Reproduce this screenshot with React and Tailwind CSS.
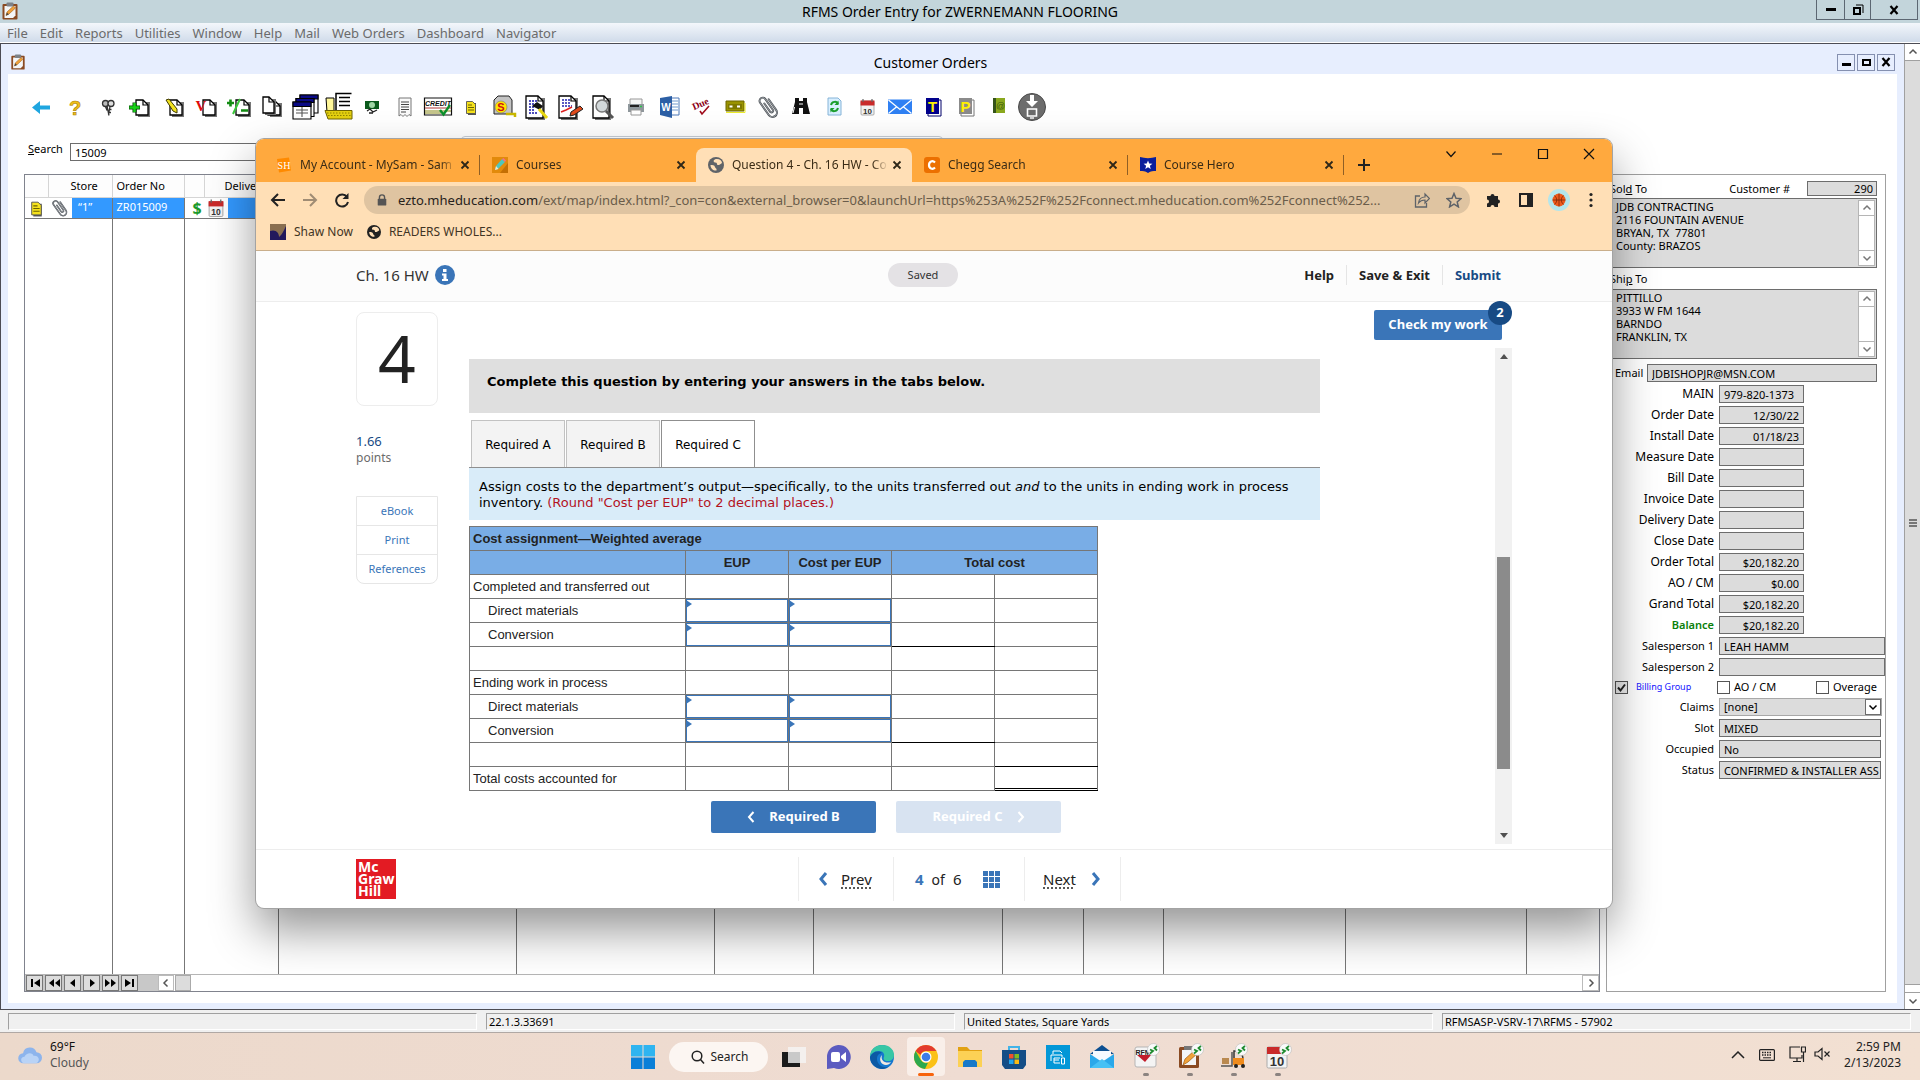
import React from 'react';

/* ---------- shared glyphs ---------- */

function Clipboard({ className }) {
  return (
    <svg viewBox="0 0 16 18" className={className} aria-hidden="true">
      <rect x="0.5" y="2" width="15" height="15.5" rx="1" fill="#8a4a22" />
      <path d="M2.5 4h11v9.5l-2.5 2.5H2.5z" fill="#f4f6f8" />
      <rect x="4.5" y="0.5" width="7" height="4" rx="1" fill="#7d8288" />
      <path d="M4 13.5l1-3.5 6.5-6 2 2-6.500 6z" fill="#f0a23a" stroke="#a15c13" strokeWidth=".6" />
      <path d="M4 13.500l1-3 1.800 1.900z" fill="#444" />
    </svg>
  );
}

function Sheet({ x = 7, y = 7, w = 15, h = 17 }) {
  return (
    <g>
      <path d={`M${x + 2} ${y + 2}h${w}v${h}h${-w}z`} fill="#777" />
      <path d={`M${x} ${y}h${w - 5}l5 5v${h - 5}h${-w}z`} fill="#fff" stroke="#000" strokeWidth="1.300" />
      <path d={`M${x + w - 5} ${y}v5h5`} fill="none" stroke="#000" strokeWidth="1.200" />
    </g>
  );
}

function Calendar() {
  return (
    <g>
      <rect x="9" y="9" width="13" height="14" rx="1" fill="#f2f2f2" stroke="#999" strokeWidth=".8" />
      <path d="M8.500 8.500h14v5h-14z" fill="#c92a2a" />
      <path d="M11 7v3M20 7v3" stroke="#666" strokeWidth="1.200" />
      <text x="15.500" y="21.500" textAnchor="middle" fontSize="8" fontWeight="700" fontFamily="Liberation Sans" fill="#333">10</text>
    </g>
  );
}

function Clip() {
  return (
    <g transform="rotate(-35 15 15)" fill="none" strokeLinecap="round">
      <path d="M20 9v13a4.500 4.500 0 0 1-9 0V7a3.200 3.200 0 0 1 6.400 0v13a1.700 1.700 0 0 1-3.400 0V10" stroke="#4b5056" strokeWidth="2" />
      <path d="M20 9v13a4.500 4.500 0 0 1-9 0V7a3.200 3.200 0 0 1 6.400 0v13a1.700 1.700 0 0 1-3.400 0V10" stroke="#b9bdc1" strokeWidth=".6" />
    </g>
  );
}

function Note() {
  return (
    <g>
      <path d="M12 11h8v12h-8z" fill="#555" />
      <path d="M10.500 9.500h6l3 3v9h-9z" fill="#f5e11c" stroke="#555" strokeWidth=".9" />
      <path d="M12 13h4M12 15.500h6M12 18h6" stroke="#6a6200" strokeWidth="1" />
    </g>
  );
}

const toolbarIcons = [
  ['Back', <path key="a" d="M5 15.500l8-6.500v4.500h10v4H13V22z" fill="#1fa6e0" />],
  ['Help', <text key="a" x="15" y="22.500" textAnchor="middle" fontSize="20" fontWeight="700" fontFamily="Liberation Sans" fill="#f0c01a" stroke="#a87b00" strokeWidth=".6">?</text>],
  ['Keys', <g key="a" fill="none" stroke="#333" strokeWidth="1.300"><circle cx="12.500" cy="11.500" r="3" fill="#bbb" /><circle cx="18" cy="11.500" r="3" fill="#ddd" /><path d="M14 14l2 9.500M17 14.500l-1.500 8M16 17.500h2.500M16 20.500h2M12.500 14.500l1.500 4" /></g>],
  ['Add order', <g key="a"><Sheet x={10} y={8} w={12} h={15} /><path d="M3 15.500h11M8.500 10.500v10" stroke="#074d07" strokeWidth="4" /><path d="M3.500 15.500h10M8.500 11v9" stroke="#19d319" strokeWidth="2.400" /></g>],
  ['Edit order', <g key="a"><Sheet x={11} y={8} w={12} h={15} /><path d="M7 8l3-1 8 10v4l-4-2z" fill="#f2e31f" stroke="#3c3800" strokeWidth="1" /></g>],
  ['Void order', <g key="a"><Sheet x={11} y={8} w={12} h={15} /><text x="9" y="19" textAnchor="middle" fontSize="15" fontWeight="700" fontFamily="Liberation Serif" fill="#e00b0b">V</text></g>],
  ['Adjust order', <g key="a"><Sheet x={11} y={8} w={13} h={15} /><path d="M2 11h7M5.500 7.500v7M16 18.500h7" stroke="#128c12" strokeWidth="2.600" /><path d="M15 7L8 22" stroke="#39c639" strokeWidth="2" /></g>],
  ['Copy', <g key="a"><Sheet x={10} y={9} w={12} h={14} /><Sheet x={5} y={5} w={11} h={16} /></g>],
  ['Windows', <g key="a" stroke="#000" strokeWidth="1.100"><path d="M9 3h18v18H9z" fill="#fff" /><path d="M9 3h18v4H9z" fill="#0a0a86" /><path d="M5 6.500h18v18H5z" fill="#fff" /><path d="M5 6.500h18v4H5z" fill="#0a0a86" /><path d="M2 10h18v17H2z" fill="#fff" /><path d="M2 10h18v4.500H2z" fill="#0a0a86" /><path d="M5 18h12M5 21h12M11 15v10" stroke="#555" /></g>],
  ['Open file', <g key="a"><path d="M11 1.500h17v18H11z" fill="#fff" /><path d="M27.500 1.500H12v17M15 5.500h11M15 9.500h11M15 13.500h11" fill="none" stroke="#000" strokeWidth="1.500" /><path d="M2 6h8v14H3z" fill="#fff79a" stroke="#000" /><path d="M1 18.500h27v8.500H4z" fill="#e3cf10" stroke="#6f6400" /><path d="M3 21h24M4 23.500h23" stroke="#8e8200" strokeDasharray="1.500 1.500" /></g>],
  ['Payment', <g key="a"><path d="M8 9h14v8H8z" fill="#0a5a1c" /><circle cx="15" cy="13" r="3" fill="#9fd6a5" /><path d="M10 19l3-2 3 3 4-2M12 21h4" stroke="#222" strokeWidth="1.300" fill="none" /></g>],
  ['Receipt', <g key="a"><path d="M9 6h12v18l-2-1.500-2 2-2-2-2 2-2-2L9 24z" fill="#fafafa" stroke="#777" /><path d="M11 10h8M11 12.500h8M11 15h8M11 17.500h8M11 20h5" stroke="#444" /></g>],
  ['Credit', <g key="a"><path d="M1.500 6h27v17h-27z" fill="#fff" stroke="#111" strokeWidth="1.200" /><path d="M2 16h26" stroke="#c87a7a" strokeWidth="1.500" /><path d="M2 19h26M2 21h16" stroke="#8b8b1b" strokeWidth="1.200" /><text x="15" y="13.500" textAnchor="middle" fontSize="7" fontWeight="700" fontStyle="italic" fontFamily="Liberation Sans" fill="#111">CREDIT</text><path d="M17 18l3.500 4.500L27 13" stroke="#0b8f2a" strokeWidth="2.400" fill="none" /></g>],
  ['Note', <Note key="a" />],
  ['Measure', <g key="a"><path d="M5 8l4-4h11l3 4v14H5z" fill="#c4c4c4" stroke="#222" /><circle cx="12" cy="15" r="6" fill="#ffe600" stroke="#777" strokeWidth=".6" /><text x="12" y="19" textAnchor="middle" fontSize="11" fontWeight="700" fontFamily="Liberation Sans" fill="#d01010">S</text><path d="M17 22h9v3" stroke="#c9b800" strokeWidth="2.500" fill="none" /></g>],
  ['Find item', <g key="a"><Sheet x={4} y={4} w={17} h={22} /><path d="M7 9h8M7 12h8M7 15h6M7 18h6M7 21h8" stroke="#1616a8" strokeWidth="1.300" strokeDasharray="2 1" /><path d="M10 14l5-4 6 4-3 4z" fill="#111" /><path d="M17 17l8 9" stroke="#e8d710" strokeWidth="3" /></g>],
  ['Sign', <g key="a"><Sheet x={4} y={4} w={17} h={22} /><path d="M7 8h8M7 11h8M7 14h10" stroke="#2222b0" strokeDasharray="2 1" strokeWidth="1.300" /><path d="M6 20l5-2 6-3" stroke="#d22" strokeWidth="1.500" fill="none" /><path d="M16 20l9-6 3 3-9 6-4 1z" fill="#e04a1b" stroke="#222" /></g>],
  ['Preview', <g key="a"><Sheet x={5} y={4} w={16} h={22} /><circle cx="14" cy="14" r="6" fill="#d2d8da" stroke="#777" strokeWidth="1.500" /><path d="M18 19l7 7" stroke="#555" strokeWidth="3" /></g>],
  ['Print', <g key="a"><path d="M9 7h12v6H9z" fill="#f5f5f5" stroke="#999" /><path d="M7 12h16v8H7z" fill="#8f979c" /><path d="M9 14h9" stroke="#222" strokeWidth="2" /><path d="M10 18h10v5H10z" fill="#fff" stroke="#999" /><path d="M19 14.500h2" stroke="#2cc04a" strokeWidth="1.500" /></g>],
  ['Word', <g key="a"><path d="M16 6h9v17h-9z" fill="#fff" stroke="#4d79b8" /><path d="M18 9h6M18 12h6M18 15h6M18 18h6" stroke="#6f98cf" /><path d="M6 6l12-2v22L6 23z" fill="#2c5fa5" /><text x="12" y="18.500" textAnchor="middle" fontSize="10" fontWeight="700" fontFamily="Liberation Sans" fill="#fff">W</text></g>],
  ['Due', <g key="a"><path d="M13 19l2 3 7-8" fill="none" stroke="#a00c1c" strokeWidth="1.600" /><text x="14" y="15" textAnchor="middle" fontSize="10" fontWeight="700" fontFamily="Liberation Serif" fill="#8c0014" transform="rotate(-24 14 13)">Due</text></g>],
  ['Ticket', <g key="a"><path d="M6 9h18v10H6z" fill="#9a9300" stroke="#6d6700" /><path d="M8 12h14v5H8z" fill="#7e7800" /><path d="M9.500 14.500h3M17 14.500h3" stroke="#fff" strokeWidth="2" /><path d="M6 20.500h19V11" stroke="#ecec2a" fill="none" /></g>],
  ['Attach', <Clip key="a" />],
  ['Search orders', <g key="a" fill="#111"><path d="M9 6h4v3h4V6h4v4l3 12h-7v-6h-4v6H6l3-12z" /><path d="M8.500 15l-1.500 6M13 12h4" stroke="#fff" strokeWidth="1" /></g>],
  ['Refresh', <g key="a"><path d="M9 6h10l3 3v14H9z" fill="#d9efff" stroke="#86b4d8" /><path d="M12 13c1-4 6-4 7-1M19 16c-1 4-6 4-7 1" fill="none" stroke="#1b9e2e" strokeWidth="2" /><path d="M19.500 8.500v4.500h-4zM11.500 20.500V16h4z" fill="#1b9e2e" /></g>],
  ['Calendar', <Calendar key="a" />],
  ['Mail', <g key="a"><path d="M3 7.500h24v14.500H3z" fill="#2f80f3" /><path d="M3.500 8L15 17.500 26.500 8M3.500 21.500l8.500-7M26.500 21.500l-8.500-7" stroke="#fff" strokeWidth="1.300" fill="none" /></g>],
  ['T', <g key="a"><path d="M10 8h13v16H10z" fill="#fff" stroke="#00006a" /><path d="M8 6h13v16H8z" fill="#00008b" /><text x="14.500" y="19.500" textAnchor="middle" fontSize="15" fontWeight="700" fontFamily="Liberation Sans" fill="#ffef00">T</text></g>],
  ['P', <g key="a"><path d="M10 8h13v16H10z" fill="#fff" stroke="#777" /><path d="M8 6h13v16H8z" fill="#8b8b8b" /><text x="14.500" y="19.500" textAnchor="middle" fontSize="15" fontWeight="700" fontFamily="Liberation Sans" fill="#ffef00">P</text></g>],
  ['Address book', <g key="a"><path d="M9 6h12v15H9z" fill="#8aa81e" /><path d="M9 6h3v15H9z" fill="#35541a" /><text x="16.500" y="16.500" textAnchor="middle" fontSize="9" fontFamily="Liberation Sans" fill="#3b5b0a">@</text></g>],
  ['Download', <g key="a"><circle cx="15" cy="15" r="13.500" fill="#6c6c6c" stroke="#4a4a4a" /><path d="M13 3h4v6h4l-6 6-6-6h4z" fill="#fff" /><path d="M10.500 17h9v7h-9z" fill="none" stroke="#fff" strokeWidth="1.600" /><path d="M13 26h4" stroke="#fff" strokeWidth="1.400" /></g>],
];

function Chevron({ dir = 'down', className }) {
  const d = {
    down: 'M1.500 3.500L5 7l3.500-3.500',
    up: 'M1.500 6.500L5 3l3.500 3.500',
    left: 'M6.500 1.500L3 5l3.500 3.500',
    right: 'M3.500 1.500L7 5l-3.500 3.500',
  }[dir];
  return (
    <svg viewBox="0 0 10 10" className={className} aria-hidden="true">
      <path d={d} fill="none" stroke="currentColor" strokeWidth="1.500" />
    </svg>
  );
}

/* ---------- order entry application ---------- */

const menus = ['File', 'Edit', 'Reports', 'Utilities', 'Window', 'Help', 'Mail', 'Web Orders', 'Dashboard', 'Navigator'];

function TitleBar() {
  return (
    <header className="grid h-[23px] shrink-0 grid-cols-[1fr_auto_1fr] items-start bg-[#c3d5db]">
      <Clipboard className="ml-0.5 mt-0.5 h-[18px] w-4" />
      <h1 className="text-[14px] leading-[23px] text-black">RFMS Order Entry for ZWERNEMANN FLOORING</h1>
      <div className="mr-0.5 flex h-5 justify-self-end border-x border-b border-[#5c6772]">
        <button aria-label="Minimize" className="flex w-[28px] items-center justify-center border-r border-[#5c6772]"><span className="h-[3px] w-2.5 bg-black" /></button>
        <button aria-label="Restore" className="flex w-[26px] items-center justify-center border-r border-[#5c6772]">
          <svg viewBox="0 0 12 12" className="h-3 w-3"><path d="M4 1h7v8" fill="none" stroke="#000" /><path d="M2 4h6v6H2z" fill="none" stroke="#000" strokeWidth="2" /></svg>
        </button>
        <button aria-label="Close" className="flex w-[46px] items-center justify-center">
          <svg viewBox="0 0 10 10" className="h-2.5 w-2.5"><path d="M1.500 1l7 8M8.500 1l-7 8" stroke="#000" strokeWidth="2.200" /></svg>
        </button>
      </div>
    </header>
  );
}

function MenuBar() {
  return (
    <nav className="flex h-5 shrink-0 items-center gap-3 border-b border-white bg-linear-to-b from-[#f3f7fb] to-[#d0dbea] pl-[7px]">
      {menus.map((m) => (
        <button key={m} className="text-[13px] leading-5 text-[#6b6b6b]">{m}</button>
      ))}
    </nav>
  );
}

function ChildTitle() {
  const box = 'flex h-[17px] w-[18px] items-center justify-center border border-[#8590b0]';
  return (
    <div className="grid h-[30px] shrink-0 grid-cols-[1fr_auto_1fr] items-center">
      <Clipboard className="ml-[9px] mt-1.5 h-[16px] w-4" />
      <h2 className="mr-11 pt-2 text-[14px] leading-5 text-black">Customer Orders</h2>
      <div className="mr-[9px] mt-1.5 flex gap-0.5 justify-self-end">
        <button aria-label="Minimize window" className={box}><span className="mt-1 h-[3px] w-[9px] bg-black" /></button>
        <button aria-label="Maximize window" className={box}><span className="h-[7px] w-[9px] border-2 border-black" /></button>
        <button aria-label="Close window" className={box}>
          <svg viewBox="0 0 10 10" className="h-2.5 w-2.5"><path d="M1.500 1l7 8M8.500 1l-7 8" stroke="#000" strokeWidth="2.200" /></svg>
        </button>
      </div>
    </div>
  );
}

const blankCols = ['w-[238px]', 'w-[198px]', 'w-[99px]', 'w-[189px]', 'w-[81px]', 'w-[80px]', 'w-[182px]', 'w-[181px]', ''];

function RowIcon({ children, viewBox = '7 6.500 17 17', className }) {
  return <svg viewBox={viewBox} className={className} aria-hidden="true">{children}</svg>;
}

const navPaths = [
  'M3 3h2v8H3zM12 3v8L6 7z',
  'M7 3v8L2 7zM13 3v8L8 7z',
  'M9 3v8L4 7z',
  'M5 3v8l5-4z',
  'M1 3v8l5-4zM7 3v8l5-4z',
  'M2 3v8l6-4zM9 3h2v8H9z',
];

function OrdersGrid() {
  const th = 'border-b border-r border-[#d5d5d5] bg-[#fdfdfd] p-0 text-left text-[11px] font-normal text-black';
  return (
    <div className="flex min-w-0 flex-1 flex-col border border-[#80838d]">
      <div className="min-h-0 flex-1">
        <table className="h-full w-full table-fixed border-collapse">
          <thead>
            <tr className="h-[22px]">
              <th aria-label="Note" className={`${th} w-[23px]`} />
              <th className={`${th} w-[64px] pl-[22px]`}>Store</th>
              <th className={`${th} w-[72px] pl-1`}>Order No</th>
              <th aria-label="Paid" className={`${th} w-[20px]`} />
              <th className={`${th} w-[74px] pl-5`}>Delivery</th>
              {blankCols.map((w, i) => <th key={i} className={`${th} ${w}`} />)}
            </tr>
          </thead>
          <tbody>
            <tr className="h-5 border-b border-[#777] text-[11px] text-white">
              <td className="p-0"><RowIcon className="mx-auto h-[18px] w-5"><Note /></RowIcon></td>
              <td className="border-r border-[#777] p-0">
                <span className="flex h-5 items-center">
                  <RowIcon viewBox="4 2 23 26" className="h-5 w-6 shrink-0"><Clip /></RowIcon>
                  <span className="flex h-full flex-1 items-center bg-[#3399ff] pl-1.5">“1”</span>
                </span>
              </td>
              <td className="border-r border-[#777] bg-[#3399ff] p-0 pl-1">ZR015009</td>
              <td className="p-0 pl-2 text-[16px] leading-[18px] font-bold text-[#1b9a2b]">$</td>
              <td className="border-r border-[#777] p-0">
                <span className="flex h-5 items-center">
                  <RowIcon className="h-[18px] w-6 shrink-0"><Calendar /></RowIcon>
                  <span className="h-full flex-1 bg-[#3399ff]" />
                </span>
              </td>
              {blankCols.map((w, i) => <td key={i} className="border-r border-[#777] bg-[#3399ff]" />)}
            </tr>
            <tr>
              <td />
              <td className="border-r border-[#777]" />
              <td className="border-r border-[#777]" />
              <td />
              <td className="border-r border-[#777]" />
              {blankCols.map((w, i) => <td key={i} className="border-r border-[#777] last:border-r-0" />)}
            </tr>
          </tbody>
        </table>
      </div>
      <div className="flex h-[17px] shrink-0 items-stretch border-t border-[#b5b5b5] bg-white">
        <div className="flex w-[133px] gap-0.5 bg-[#c8c8c8] pl-px">
          {navPaths.map((d, i) => (
            <button key={i} aria-label={`Record navigation ${i + 1}`} className="flex w-[17px] items-center justify-center border border-[#777] bg-[#dcdcdc]">
              <svg viewBox="0 0 14 14" className="h-3.5 w-3.5"><path d={d} fill="#000" /></svg>
            </button>
          ))}
        </div>
        <button aria-label="Scroll left" className="flex w-4 items-center justify-center border border-[#bbb] text-[#555]"><Chevron dir="left" className="h-2.5 w-2.5" /></button>
        <span className="ml-px w-4 border border-[#aaa] bg-[#dcdcdc]" />
        <span className="flex-1" />
        <button aria-label="Scroll right" className="flex w-[17px] items-center justify-center border border-[#bbb] text-[#555]"><Chevron dir="right" className="h-2.5 w-2.5" /></button>
      </div>
    </div>
  );
}

const field = 'h-[18px] border border-[#6d6d6d] bg-[#dcdcdc] pl-1 text-[11px] leading-4 text-black outline-none';

function AddressBox({ id, label, lines }) {
  return (
    <div className="mr-2 flex h-[70px] border border-[#6d6d6d] bg-[#dcdcdc]">
      <textarea id={id} aria-label={label} readOnly defaultValue={lines} className="min-w-0 flex-1 resize-none overflow-hidden pl-[6px] pt-px text-[11px] leading-[13px] text-black outline-none" />
      <div className="m-px flex w-[17px] flex-col border border-[#b5b5b5] bg-white text-[#777]">
        <button aria-label={`${label} scroll up`} className="flex h-[15px] items-center justify-center border-b border-[#b5b5b5]"><Chevron dir="up" className="h-2.5 w-2.5" /></button>
        <span className="flex-1" />
        <button aria-label={`${label} scroll down`} className="flex h-[15px] items-center justify-center border-t border-[#b5b5b5]"><Chevron className="h-2.5 w-2.5" /></button>
      </div>
    </div>
  );
}

const amounts = [
  ['MAIN', '979-820-1373', true],
  ['Order Date', '12/30/22'],
  ['Install Date', '01/18/23'],
  ['Measure Date', ''],
  ['Bill Date', ''],
  ['Invoice Date', ''],
  ['Delivery Date', ''],
  ['Close Date', ''],
  ['Order Total', '$20,182.20'],
  ['AO / CM', '$0.00'],
  ['Grand Total', '$20,182.20'],
  ['Balance', '$20,182.20'],
];

function CustomerPanel() {
  const row = 'flex items-center gap-[5px]';
  const lab = 'w-[105px] shrink-0 text-right text-[12px] leading-[18px]';
  const labSmall = 'w-[105px] shrink-0 text-right text-[11px] leading-[18px]';
  return (
    <aside className="flex w-[280px] shrink-0 flex-col border border-[#a0a0a0] pl-0.5 text-black">
      <div className="mr-2 flex h-[23px] items-center pt-1">
        <label htmlFor="sold" className="flex-1 pl-px text-[11px] leading-4">Sol<u>d</u> To</label>
        <label htmlFor="cust" className="mr-[17px] text-[11px] leading-4">Customer #</label>
        <input id="cust" readOnly defaultValue="290" className="h-[15px] w-[70px] border border-[#6d6d6d] bg-[#dcdcdc] px-[3px] text-right text-[11px] leading-3 outline-none" />
      </div>
      <AddressBox id="sold" label="Sold To address" lines={'JDB CONTRACTING\n2116 FOUNTAIN AVENUE\nBRYAN, TX  77801\nCounty: BRAZOS'} />
      <label htmlFor="ship" className="h-[21px] pl-px pt-0.5 text-[11px] leading-[18px]">Shi<u>p</u> To</label>
      <AddressBox id="ship" label="Ship To address" lines={'PITTILLO\n3933 W FM 1644\nBARNDO\nFRANKLIN, TX'} />
      <div className="mt-[5px] flex flex-col gap-[3px]">
        <div className="mr-2 flex items-center">
          <label htmlFor="email" className="w-[38px] pl-1.5 text-[11px] leading-4">Email</label>
          <input id="email" readOnly defaultValue="JDBISHOPJR@MSN.COM" className={`${field} min-w-0 flex-1`} />
        </div>
        {amounts.map(([name, value, left]) => (
          <div key={name} className={row}>
            <label htmlFor={name} className={name === 'Balance' ? `${labSmall} font-semibold text-[#0a800a]` : lab}>{name}</label>
            <input id={name} readOnly defaultValue={value} className={`${field} w-[85px] ${left ? '' : 'pr-1 text-right'}`} />
          </div>
        ))}
        {[['Salesperson 1', 'LEAH HAMM'], ['Salesperson 2', '']].map(([name, value]) => (
          <div key={name} className={row}>
            <label htmlFor={name} className={labSmall}>{name}</label>
            <input id={name} readOnly defaultValue={value} className={`${field} min-w-0 flex-1`} />
          </div>
        ))}
        <div className="flex h-4 items-center text-[12px] leading-4">
          <label className="ml-[6px] flex w-[102px] items-center gap-2 text-[9px] text-[#1414ff]">
            <span className="relative flex h-[13px] w-[13px]">
              <input type="checkbox" defaultChecked className="peer h-[13px] w-[13px] appearance-none border border-[#555] bg-[#eee]" />
              <svg viewBox="0 0 13 13" className="pointer-events-none absolute inset-0 hidden h-full w-full peer-checked:block"><path d="M3 6.500l2.500 3L10 3.500" fill="none" stroke="#222" strokeWidth="2" /></svg>
            </span>
            Billing Group
          </label>
          <label className="flex w-[99px] items-center gap-1 text-[11px]"><input type="checkbox" className="h-[13px] w-[13px] appearance-none border border-[#555] bg-white" />AO / CM</label>
          <label className="flex items-center gap-1 text-[11px]"><input type="checkbox" className="h-[13px] w-[13px] appearance-none border border-[#555] bg-white" />Overage</label>
        </div>
        <div className={`${row} mr-1`}>
          <label htmlFor="claims" className={labSmall}>Claims</label>
          <div className="flex min-w-0 flex-1 items-center">
            <select id="claims" className={`${field} min-w-0 flex-1 appearance-none border-[#a8a8a8]`}><option>[none]</option></select>
            <span className="pointer-events-none -ml-[17px] flex h-4 w-4 items-center justify-center border border-[#6d6d6d] bg-white"><Chevron className="h-2.5 w-2.5" /></span>
          </div>
        </div>
        {[['Slot', 'MIXED'], ['Occupied', 'No'], ['Status', 'CONFIRMED & INSTALLER ASS']].map(([name, value]) => (
          <div key={name} className={`${row} mr-1`}>
            <label htmlFor={name} className={labSmall}>{name}</label>
            <input id={name} readOnly defaultValue={value} className={`${field} min-w-0 flex-1`} />
          </div>
        ))}
      </div>
    </aside>
  );
}

function OrderEntry() {
  return (
    <section className="flex min-h-0 flex-1 border-y border-l border-[#4c4c54] bg-[#e7eefe]">
      <div className="flex min-w-0 flex-1 flex-col pb-1.5">
        <ChildTitle />
        <div className="ml-[7px] mr-[7px] flex min-h-0 flex-1 flex-col bg-white">
          <div className="flex h-[62px] shrink-0 items-center pl-[17px] pt-1">
            {toolbarIcons.map(([name, art]) => (
              <button key={name} aria-label={name} className="flex w-[33px] shrink-0 justify-center">
                <svg viewBox="0 0 30 30" className="h-[30px] w-[30px]">{art}</svg>
              </button>
            ))}
          </div>
          <div className="flex h-[38px] shrink-0 pl-5">
            <label htmlFor="search" className="w-[42px] pt-[5px] text-[11px] leading-4 text-black"><u>S</u>earch</label>
            <input id="search" defaultValue="15009" className="mt-[7px] h-[18px] w-[280px] border border-[#6d6d6d] px-1 text-[11px] leading-4 text-black outline-none" />
            <span className="ml-[111px] h-[30px] w-[482px] rounded-t border border-[#c5cdd5]" />
          </div>
          <div className="mb-[11px] ml-4 mr-[11px] flex min-h-0 flex-1 gap-1.5">
            <OrdersGrid />
            <CustomerPanel />
          </div>
        </div>
      </div>
      <div className="flex w-4 shrink-0 flex-col border-l border-[#a0a0a0] bg-[#dcdcdc] text-[#555]">
        <button aria-label="Scroll up" className="flex h-[17px] items-center justify-center border-b border-[#a0a0a0] bg-white"><Chevron dir="up" className="h-2.5 w-2.5" /></button>
        <span className="flex flex-1 items-center justify-center">
          <svg viewBox="0 0 8 8" className="h-2 w-2"><path d="M0 1h8M0 4h8M0 7h8" stroke="#555" strokeWidth="1.500" /></svg>
        </span>
        <span className="h-2 border-t border-[#a0a0a0] bg-white" />
        <button aria-label="Scroll down" className="flex h-[17px] items-center justify-center border-t border-[#a0a0a0] bg-white"><Chevron className="h-2.5 w-2.5" /></button>
      </div>
    </section>
  );
}

function StatusBar() {
  return (
    <footer className="grid h-[23px] shrink-0 grid-cols-4 items-center gap-[9px] border-b border-[#b0a8a4] bg-[#f0f0f0] pl-2 pr-[9px]">
      {['', '22.1.3.33691', 'United States, Square Yards', 'RFMSASP-VSRV-17\\RFMS - 57902'].map((t, i) => (
        <div key={i} className="h-[17px] border border-b-white border-l-[#a0a0a0] border-r-white border-t-[#a0a0a0] pl-0.5 text-[11px] leading-4 text-black">{t}</div>
      ))}
    </footer>
  );
}

/* ---------- browser window ---------- */

function Globe({ className }) {
  return (
    <svg viewBox="0 0 16 16" className={className} aria-hidden="true">
      <circle cx="8" cy="8" r="8" fill="currentColor" />
      <path d="M9 2c-3 0-4 2-3 3 1 1 3 0 3 2s3 1 5-1c0-2-2-4-5-4zM2.500 8c2 0 4 0 4.500 2s2 1 1.500 3.500c-3 .5-6-2-6-5.500z" fill="#ffdfb6" />
    </svg>
  );
}

const tabIcons = {
  sh: (
    <svg viewBox="0 0 16 16" className="h-4 w-4"><path d="M1 2l12-1.500 2 13L3 15.500z" fill="#ff8a00" /><text x="8" y="12" textAnchor="middle" fontSize="10" fontFamily="Liberation Serif" fill="#fff">SH</text></svg>
  ),
  pencil: (
    <svg viewBox="0 0 16 16" className="h-4 w-4"><path d="M0 0h16v16H0z" fill="#e28a0b" /><path d="M8 16h8V6z" fill="#c46f04" /><path d="M3 13l1-4 6-7 3 3-7 7z" fill="#4fc6bd" /><path d="M10 2l1.500-1L14 3.500 13 5z" fill="#f2708a" /><path d="M3 13l1-4 2.500 3z" fill="#f7e6c8" /></svg>
  ),
  globe: <Globe className="h-4 w-4 text-[#5f6368]" />,
  chegg: (
    <svg viewBox="0 0 16 16" className="h-4 w-4"><rect width="16" height="16" rx="3" fill="#ec7000" /><path d="M11 5.500C8.500 3 5 4.500 5 8s3.500 5 6 2.500" fill="none" stroke="#fff" strokeWidth="2.200" /></svg>
  ),
  hero: (
    <svg viewBox="0 0 16 16" className="h-4 w-4"><path d="M0 0c5 1.500 11 1.500 16 0v14c-3 0-5 0-8 2-3-2-5-2-8-2z" fill="#0a1f9c" /><path d="M8 3.500l1.200 3 3.200.2-2.500 2 .8 3.200L8 10.200l-2.700 1.700.8-3.200-2.500-2 3.200-.2z" fill="#fff" /></svg>
  ),
};

const tabs = [
  ['sh', 'My Account - MySam - Sam', false, true],
  ['pencil', 'Courses', false, false],
  ['globe', 'Question 4 - Ch. 16 HW - Co', true, false],
  ['chegg', 'Chegg Search', false, true],
  ['hero', 'Course Hero', false, true],
];

function TabStrip() {
  return (
    <div className="flex h-[43px] shrink-0 bg-[#ffa93e] pl-2">
      <div className="flex items-end">
        {tabs.map(([icon, text, active, sep]) => (
          <div key={text} className={`relative flex h-[34px] w-[216px] items-center pl-3 pr-2.5 ${active ? 'rounded-t-lg bg-[#ffdfb6]' : ''}`}>
            {tabIcons[icon]}
            <button className="ml-2 min-w-0 flex-1 overflow-hidden mask-r-from-90% text-left text-[12px] leading-5 whitespace-nowrap text-[#3b2c16]">{text}</button>
            <button aria-label={`Close ${text}`} className="ml-1">
              <svg viewBox="0 0 10 10" className="h-2.5 w-2.5"><path d="M1.500 1.500l7 7M8.500 1.500l-7 7" stroke="#2e2718" strokeWidth="1.800" /></svg>
            </button>
            {sep && <span className="absolute right-0 top-[7px] h-5 w-px bg-[#8f5f25]" />}
          </div>
        ))}
        <button aria-label="New tab" className="ml-3 flex h-[34px] w-4 items-center justify-center">
          <svg viewBox="0 0 12 12" className="h-3 w-3"><path d="M6 0v12M0 6h12" stroke="#222" strokeWidth="2" /></svg>
        </button>
      </div>
      <div className="ml-auto flex h-[30px] items-center">
        {[
          ['Search tabs', 'M1.500 3.500L6 8.500l4.500-5'],
          ['Minimize browser', 'M1 6h10'],
          ['Maximize browser', 'M1.500 1.500h9v9h-9z'],
          ['Close browser', 'M1 1l10 10M11 1L1 11'],
        ].map(([name, d]) => (
          <button key={name} aria-label={name} className="flex w-[46px] items-center justify-center">
            <svg viewBox="0 0 12 12" className="h-3 w-3"><path d={d} fill="none" stroke="#111" strokeWidth="1.200" /></svg>
          </button>
        ))}
      </div>
    </div>
  );
}

function AddressBar() {
  return (
    <div className="flex h-[36px] shrink-0 items-center bg-[#ffdfb6] pl-3.5">
      <button aria-label="Go back" className="mr-4"><svg viewBox="0 0 16 16" className="h-4 w-4"><path d="M15 8H2M8 2L2 8l6 6" fill="none" stroke="#222" strokeWidth="2" /></svg></button>
      <button aria-label="Go forward" className="mr-4"><svg viewBox="0 0 16 16" className="h-4 w-4"><path d="M1 8h13M8 2l6 6-6 6" fill="none" stroke="#a08c74" strokeWidth="2" /></svg></button>
      <button aria-label="Reload" className="mr-3.5"><svg viewBox="0 0 16 16" className="h-4 w-4"><path d="M13 5a6 6 0 1 0 1 5" fill="none" stroke="#222" strokeWidth="2" /><path d="M14.500 1v6h-6z" fill="#222" /></svg></button>
      <div className="flex h-7 min-w-0 flex-1 items-center rounded-full bg-[#dfc4a1] pl-3 pr-2">
        <svg viewBox="0 0 12 14" className="h-3 w-3 shrink-0"><path d="M3 6V4a3 3 0 0 1 6 0v2" fill="none" stroke="#555" strokeWidth="1.600" /><rect x="1" y="5.500" width="10" height="8" rx="1" fill="#555" /></svg>
        <div className="ml-2.5 min-w-0 flex-1 truncate text-[13px] leading-7 text-[#6a5c4a]">
          <span className="text-[#26211a]">ezto.mheducation.com</span>/ext/map/index.html?_con=con&amp;external_browser=0&amp;launchUrl=https%253A%252F%252Fconnect.mheducation.com%252Fconnect%252...
        </div>
        <button aria-label="Share" className="ml-1"><svg viewBox="0 0 16 16" className="h-4 w-4"><path d="M6 4H1.500v11h11v-4" fill="none" stroke="#5f6368" strokeWidth="1.300" /><path d="M4.500 11c.5-4 3-6 6.500-6V2l4.500 4.500L11 11V8c-3 0-5 1-6.500 3z" fill="none" stroke="#5f6368" strokeWidth="1.200" /></svg></button>
        <button aria-label="Bookmark" className="ml-4"><svg viewBox="0 0 16 16" className="h-4 w-4"><path d="M8 1.500l2 4.700 5 .4-3.800 3.300 1.200 5L8 12.200 3.600 14.900l1.200-5L1 6.600l5-.4z" fill="none" stroke="#5f6368" strokeWidth="1.500" /></svg></button>
      </div>
      <button aria-label="Extensions" className="ml-4"><svg viewBox="0 0 16 16" className="h-4 w-4"><path d="M1 4h3.500a2 2 0 1 1 4 0H12v3.500a2 2 0 1 1 0 4V15H8.500a2 2 0 0 0-4 0H1v-3.500a2 2 0 0 0 0-4z" fill="#222" /></svg></button>
      <button aria-label="Side panel" className="ml-[17px] flex h-3.5 w-3.5 border-2 border-[#222]"><span className="ml-auto h-full w-1 bg-[#222]" /></button>
      <button aria-label="Profile" className="ml-[15px] flex h-[22px] w-[22px] items-center justify-center rounded-full bg-[#b4e6ec]">
        <svg viewBox="0 0 14 14" className="h-3.5 w-3.5"><circle cx="7" cy="7" r="6.500" fill="#ee5a1b" /><path d="M7 .5v13M.5 7h13M2.500 2.500c3 3 3 6 0 9M11.500 2.500c-3 3-3 6 0 9" fill="none" stroke="#6b2407" strokeWidth=".7" /></svg>
      </button>
      <button aria-label="Browser menu" className="mx-[13px]"><svg viewBox="0 0 16 16" className="h-4 w-4"><g fill="#222"><circle cx="8" cy="2.500" r="1.600" /><circle cx="8" cy="8" r="1.600" /><circle cx="8" cy="13.500" r="1.600" /></g></svg></button>
    </div>
  );
}

function Bookmarks() {
  return (
    <div className="flex h-[33px] shrink-0 items-center border-b border-[#c9ae8b] bg-[#ffdfb6] pb-1 pl-3.5 text-[12px] text-[#3f3424]">
      <a href="#shaw" className="mr-3.5 flex items-center gap-2">
        <svg viewBox="0 0 16 16" className="h-4 w-4"><path d="M0 0h16v16H0z" fill="#8a6f50" /><path d="M0 7c6-2 9 2 9 6 3-2 5-7 7-11v14H0z" fill="#22185c" /></svg>
        Shaw Now
      </a>
      <a href="#readers" className="flex items-center gap-2"><Globe className="h-3.5 w-3.5 text-[#222]" />READERS WHOLES...</a>
    </div>
  );
}

const costRows = [
  { label: 'Completed and transferred out' },
  { label: 'Direct materials', indent: true, entry: true },
  { label: 'Conversion', indent: true, entry: true, sum: true },
  { label: '' },
  { label: 'Ending work in process' },
  { label: 'Direct materials', indent: true, entry: true },
  { label: 'Conversion', indent: true, entry: true, sum: true },
  { label: '', before: true },
  { label: 'Total costs accounted for', total: true },
];

function EntryCell({ label }) {
  return (
    <td className="relative border border-[#767676] p-0">
      <input aria-label={label} className="block h-[23px] w-full border border-[#3a75b8] bg-white px-1 text-right text-[13px] outline-none" />
      <svg viewBox="0 0 6 8" className="absolute left-0 top-px h-2 w-1.5"><path d="M0 0l6 4-6 4z" fill="#3a75b8" /></svg>
    </td>
  );
}

function CostTable() {
  const c = 'border border-[#767676] p-0';
  return (
    <table className="mt-1.5 w-[629px] table-fixed border-collapse font-['Liberation_Sans',Arial,sans-serif] text-[13px] leading-4 text-[#222]">
      <colgroup>
        <col className="w-[216px]" /><col className="w-[103px]" /><col className="w-[103px]" /><col className="w-[103px]" /><col className="w-[103px]" />
      </colgroup>
      <thead className="bg-[#79ade6]">
        <tr className="h-6"><th colSpan={5} className={`${c} pl-[3px] text-left`}>Cost assignment—Weighted average</th></tr>
        <tr className="h-6"><th aria-label="Item" className={c} /><th className={c}>EUP</th><th className={c}>Cost per EUP</th><th colSpan={2} className={c}>Total cost</th></tr>
      </thead>
      <tbody>
        {costRows.map((r, i) => (
          <tr key={i} className="h-6">
            <td className={`${c} ${r.indent ? 'pl-[18px]' : 'pl-[3px]'}`}>{r.label}</td>
            {r.entry ? <EntryCell label={`${r.label} EUP`} /> : <td className={c} />}
            {r.entry ? <EntryCell label={`${r.label} cost per EUP`} /> : <td className={c} />}
            <td className={`${c} ${r.sum ? 'border-b-black' : ''}`} />
            <td className={`${c} ${r.before || r.total ? 'border-b-black' : ''} ${r.total ? 'align-bottom' : ''}`}>
              {r.total && <span className="block h-0.5 border-t border-black" />}
            </td>
          </tr>
        ))}
      </tbody>
    </table>
  );
}

function Question() {
  const tab = 'h-[47px] w-[94px] border border-b-0 pt-0.5 text-[12px] text-black';
  return (
    <div className="w-[851px] shrink-0 pt-[57px] font-['DejaVu_Sans',Verdana,sans-serif] text-black">
      <div className="h-[54px] bg-[#dfdfdf] pl-[18px] pt-3.5 text-[13px] leading-[18px] font-bold">Complete this question by entering your answers in the tabs below.</div>
      <div role="tablist" className="mt-[7px] flex h-[48px] gap-px border-b border-[#8f8f8f] pl-0.5">
        <button role="tab" className={`${tab} border-[#c2c2c2] bg-[#f3f3f3]`}>Required A</button>
        <button role="tab" className={`${tab} border-[#c2c2c2] bg-[#f3f3f3]`}>Required B</button>
        <button role="tab" aria-selected="true" className={`${tab} h-12 border-[#8f8f8f] bg-white`}>Required C</button>
      </div>
      <p className="h-[52px] bg-[#d9ecf9] px-2.5 pt-[11px] text-[13px] leading-4">
        Assign costs to the department’s output—specifically, to the units transferred out <i>and</i> to the units in ending work in process inventory. <span className="text-[#b3131f]">(Round "Cost per EUP" to 2 decimal places.)</span>
      </p>
      <CostTable />
      <div className="mt-2.5 flex gap-5 pl-[242px] text-[13px] font-bold text-white font-['Noto_Sans','Open_Sans',sans-serif]">
        <button className="flex h-8 w-[165px] items-center justify-center gap-3.5 rounded-xs bg-[#3a75b8]">
          <svg viewBox="0 0 8 12" className="h-3 w-2"><path d="M6.500 1L2 6l4.500 5" fill="none" stroke="currentColor" strokeWidth="2" /></svg>Required B
        </button>
        <button disabled className="flex h-8 w-[165px] items-center justify-center gap-3.5 rounded-xs bg-[#d8e3f1]">
          Required C<svg viewBox="0 0 8 12" className="h-3 w-2"><path d="M1.500 1L6 6l-4.500 5" fill="none" stroke="currentColor" strokeWidth="2" /></svg>
        </button>
      </div>
    </div>
  );
}

function Browser() {
  return (
    <main className="absolute top-[139px] right-[308px] bottom-[172px] left-64 flex flex-col overflow-hidden rounded-lg bg-white shadow-[0_0_0_1px_#a3a3a3,0_22px_46px_rgba(0,0,0,0.42)]">
      <TabStrip />
      <AddressBar />
      <Bookmarks />
      <div className="flex h-[51px] shrink-0 items-center border-b border-[#ededed] bg-[#fcfcfc] pb-0.5 pr-[95px] pl-[100px]">
        <h3 className="w-[532px] text-[15px] text-[#333]">
          <span className="flex items-center gap-1.5">Ch. 16 HW
            <svg viewBox="0 0 20 20" className="h-5 w-5"><circle cx="10" cy="10" r="10" fill="#3a75b8" /><path d="M8 4h3.500v3H8zM7 8.500h4.500V14H13v2H7v-2h1.500v-3.500H7z" fill="#fff" /></svg>
          </span>
        </h3>
        <span className="flex h-6 w-[70px] items-center justify-center rounded-full bg-[#e4e2e5] text-[11px] text-[#333]">Saved</span>
        <div className="ml-auto flex items-center text-[13px] leading-5 font-bold text-[#222]">
          <button className="border-r border-[#e5e5e5] px-3">Help</button>
          <button className="border-r border-[#e5e5e5] px-3">Save &amp; Exit</button>
          <button className="pl-3 pr-4 text-[#174a84]">Submit</button>
        </div>
      </div>
      <div className="flex min-h-0 flex-1 pl-[100px]">
        <div className="w-[113px] shrink-0 pt-2.5">
          <div className="flex h-[94px] w-[82px] items-center justify-center rounded-lg border border-[#ededed] pb-1 text-[66px] leading-none text-[#222]">4</div>
          <div className="mt-[27px] text-[13px] leading-4 text-[#174a84]">1.66</div>
          <div className="text-[12px] leading-[18px] text-[#6b6b6b]">points</div>
          <nav className="mt-[29px] flex w-[82px] flex-col divide-y divide-[#e6e6e6] rounded-b-lg border border-[#e6e6e6] text-center text-[11px] leading-7 text-[#3a75b8]">
            <a href="#ebook">eBook</a>
            <a href="#print">Print</a>
            <a href="#references">References</a>
          </nav>
        </div>
        <Question />
        <div className="mr-[100px] flex min-w-0 flex-1 flex-col items-end pt-2 pb-[5px]">
          <button className="relative mr-2.5 h-[30px] w-32 shrink-0 rounded-xs bg-[#3a75b8] text-[13px] font-bold text-white">
            Check my work
            <span className="absolute -top-[9px] -right-2.5 flex h-6 w-6 items-center justify-center rounded-full bg-[#174a84]">2</span>
          </button>
          <div className="mt-2 flex min-h-0 w-[17px] flex-1 flex-col items-center bg-[#f1f1f1] py-[6px]">
            <svg viewBox="0 0 8 5" className="h-[5px] w-2"><path d="M0 5l4-5 4 5z" fill="#505050" /></svg>
            <span className="flex-[196]" />
            <span className="w-[13px] flex-[211] bg-[#8b8b8b]" />
            <span className="flex-[63]" />
            <svg viewBox="0 0 8 5" className="h-[5px] w-2"><path d="M0 0l4 5 4-5z" fill="#505050" /></svg>
          </div>
        </div>
      </div>
      <div className="flex h-[59px] shrink-0 items-center border-t border-[#ededed] pl-[100px] text-[15px] text-[#222]">
        <div className="h-10 w-10 bg-[#e31b23] pl-0.5 pt-0.5 text-[14px] leading-3 font-bold text-white">Mc<br />Graw<br />Hill</div>
        <div className="ml-[402px] flex h-11 items-stretch divide-x divide-[#ededed] border-l border-[#ededed]">
          <button className="flex w-[95px] items-center gap-3 pl-[18px]">
            <svg viewBox="0 0 12 14" className="h-3.5 w-3 text-[#3a75b8]"><path d="M9 1L4 7l5 6" fill="none" stroke="currentColor" strokeWidth="3" /></svg>
            <span className="underline decoration-dotted underline-offset-3">Prev</span>
          </button>
          <div className="flex w-[131px] items-center pl-[21px]">
            <b className="text-[#3a75b8]">4</b><span className="pl-2 text-[14px]">of</span><span className="pl-2">6</span>
            <button aria-label="Question list" className="ml-[22px] grid grid-cols-3 gap-px">
              {Array.from({ length: 9 }, (_, i) => <span key={i} className="h-[5px] w-[5px] bg-[#3a75b8]" />)}
            </button>
          </div>
          <button className="flex w-24 items-center gap-3.5 border-r border-[#ededed] pl-[18px]">
            <span className="underline decoration-dotted underline-offset-3">Next</span>
            <svg viewBox="0 0 12 14" className="h-3.5 w-3 text-[#3a75b8]"><path d="M3 1l5 6-5 6" fill="none" stroke="currentColor" strokeWidth="3" /></svg>
          </button>
        </div>
      </div>
    </main>
  );
}

/* ---------- taskbar ---------- */

const Remote = <g><circle cx="21.500" cy="6.500" r="6" fill="#fafafa" stroke="#bbb" strokeWidth=".6" /><path d="M18 6.500l3 1.500-3 2.500M25 3l-2.500 2L25 7.500" fill="none" stroke="#1d8b2f" strokeWidth="1.800" /></g>;

const taskIcons = [
  ['Task view', <g key="a"><path d="M2 9h18v15H2z" fill="#1b1b1b" /><path d="M8 4h18v16H8z" fill="#f5f5f5" fillOpacity=".8" /></g>],
  ['Chat', <g key="a"><path d="M14 2a12 12 0 1 1-4 23l-7 1V14A12 12 0 0 1 14 2z" fill="#5b5bc0" /><rect x="7" y="9" width="9" height="10" rx="2" fill="#fff" /><path d="M17 13l5-4v10l-5-4z" fill="#fff" /></g>],
  ['Edge', <g key="a"><circle cx="14" cy="14" r="12" fill="#1678cf" /><path d="M2 14C2 6 8 2 14 2c8 0 12 5 12 10 0 4-3 6-6 6-4 0-5-2-4-4 1-3-1-6-5-6-5 0-8 3-9 6z" fill="#38c7a5" /><path d="M2 14c2-5 8-7 12-4-6 0-7 9-1 13 2 1 5 2 8 0-3 3-7 4-11 2-5-2-8-6-8-11z" fill="#0c59a4" /><path d="M14 12c-2 6 4 9 9 7-1 2-3 3-5 3-5 0-8-6-4-10z" fill="#f3e9e2" /></g>],
  ['Chrome', <g key="a"><circle cx="14" cy="14" r="12" fill="#fbc116" /><path d="M3.600 8a12 12 0 0 1 20.800 0H14a6 6 0 0 0-5.500 4z" fill="#e33b2e" /><path d="M3.600 8l5.200 9a6 6 0 0 0 7.200 2.700L13 26A12 12 0 0 1 3.600 8z" fill="#2da94f" /><circle cx="14" cy="14" r="5.500" fill="#fff" /><circle cx="14" cy="14" r="4.300" fill="#3d7de8" /></g>],
  ['Files', <g key="a"><path d="M2 4h9l3 3h12v5H2z" fill="#e2a112" /><path d="M2 8h24v16H2z" fill="#fcd155" /><path d="M7 24v-5l2-2h10l2 2v5z" fill="#1679c9" /></g>],
  ['Store', <g key="a"><path d="M9 7V4h10v3" fill="none" stroke="#42b3e8" strokeWidth="2" /><path d="M2 7h24v15l-3 4H5l-3-4z" fill="#144d86" /><path d="M9 11h4.500v4.500H9z" fill="#f1522a" /><path d="M14.500 11H19v4.500h-4.500z" fill="#80bc1f" /><path d="M9 16.500h4.500V21H9z" fill="#1fa6ef" /><path d="M14.500 16.500H19V21h-4.500z" fill="#fcbb13" /></g>],
  ['Scanner', <g key="a"><path d="M2 2h24v24H2z" fill="#0397d7" /><path d="M9 11V8h7l2 2M7 18v-6h11v2M10 20v-5h6M10 17h5M10 20h6M17.500 15h3v6h-3z" fill="none" stroke="#fff" strokeWidth="1" /></g>],
  ['Mail', <g key="a"><path d="M14 2l12 9H2z" fill="#0c4f91" /><path d="M5 8h18v9H5z" fill="#f5f9ff" /><path d="M2 11l12 8 12-8v14H2z" fill="#2aa8ea" /><path d="M2 25l12-9 12 9z" fill="#46c1f5" /></g>],
  ['RFMS', <g key="a"><rect x="3" y="4" width="21" height="20" rx="2" fill="#f4f4f4" stroke="#b5b5b5" /><path d="M5 12h14l-6 7z" fill="#c21d2b" /><text x="11" y="12" textAnchor="middle" fontSize="7" fontWeight="700" fontFamily="Liberation Sans" fill="#222">RFM</text>{Remote}</g>, true],
  ['Order entry', <g key="a"><rect x="3" y="4" width="20" height="21" rx="1.500" fill="#8a4a22" /><path d="M6 7h14v15H6z" fill="#f3f5f7" /><path d="M8 3h9v4H8z" fill="#777" /><path d="M7 22l2-6 10-9 3 3-10 9z" fill="#f0a23a" stroke="#a15c13" strokeWidth=".7" />{Remote}</g>, true],
  ['Warehouse', <g key="a"><path d="M2 15h7v6H2z" fill="#b98950" /><path d="M1 23h11V9" fill="none" stroke="#555" strokeWidth="1.500" /><path d="M13 15h11v7H13z" fill="#ef8b1d" /><path d="M14 15V8h7l2 7" fill="none" stroke="#333" strokeWidth="1.500" /><circle cx="16" cy="23" r="2" fill="#222" /><circle cx="23" cy="23" r="2" fill="#222" />{Remote}</g>, true],
  ['Schedule', <g key="a"><rect x="3" y="4" width="20" height="21" rx="1.500" fill="#f3f3f3" stroke="#aaa" /><path d="M3 4h20v7H3z" fill="#c92a2a" /><text x="13" y="22.500" textAnchor="middle" fontSize="13" fontWeight="700" fontFamily="Liberation Sans" fill="#333">10</text>{Remote}</g>, true],
];

function Taskbar() {
  return (
    <nav className="grid h-[47px] shrink-0 grid-cols-[1fr_auto_1fr] items-stretch bg-linear-to-r from-[#ecd9cb] via-[#efdcd2] to-[#f2e0d2] text-[12px] leading-4">
      <button className="flex items-center gap-2 justify-self-start pb-1 pl-[18px] text-left">
        <svg viewBox="0 0 26 20" className="h-5 w-6"><path d="M6 19a5.500 5.500 0 0 1-.5-11A7.500 7.500 0 0 1 20 7a6 6 0 0 1 0 12z" fill="#8db4ec" /><path d="M6 19c-4-2-3-7 1-7 2-5 9-5 10-1 5-1 8 5 3 8z" fill="#b9d3f6" /></svg>
        <span><span className="block text-[#111]">69°F</span><span className="block text-[#555]">Cloudy</span></span>
      </button>
      <div className="flex items-center">
        <button aria-label="Start" className="flex w-11 justify-center">
          <svg viewBox="0 0 24 24" className="h-6 w-6"><path d="M0 0h11.500v11.500H0zM12.500 0H24v11.500H12.500z" fill="#2fb4f0" /><path d="M0 12.500h11.500V24H0zM12.500 12.500H24V24H12.500z" fill="#0a7fd8" /></svg>
        </button>
        <button className="mx-1 flex h-[30px] w-[99px] items-center gap-1.5 rounded-full bg-[#fcf6f2] pl-[22px] text-[12px] text-[#222]">
          <svg viewBox="0 0 14 14" className="h-3.5 w-3.5"><circle cx="6" cy="6" r="4.800" fill="none" stroke="#222" strokeWidth="1.500" /><path d="M9.500 9.500L13 13.500" stroke="#222" strokeWidth="1.500" /></svg>
          Search
        </button>
        {taskIcons.map(([name, art, open]) => (
          <button key={name} aria-label={name} className="relative flex w-11 justify-center">
            <span className={`flex h-[39px] w-[38px] items-center justify-center rounded ${name === 'Chrome' ? 'bg-[#f9efe9]' : ''}`}>
              <svg viewBox="0 0 28 28" className="h-7 w-7">{art}</svg>
            </span>
            {name === 'Chrome' && <span className="absolute bottom-0 h-[3px] w-4 rounded-full bg-[#f7630c]" />}
            {open && <span className="absolute bottom-0 h-[3px] w-1.5 rounded-full bg-[#8b8380]" />}
          </button>
        ))}
      </div>
      <div className="flex items-center gap-3.5 justify-self-end pr-[19px] pb-1 text-[#222]">
        <button aria-label="Hidden icons"><svg viewBox="0 0 14 8" className="h-2 w-3.5"><path d="M1 7l6-6 6 6" fill="none" stroke="currentColor" strokeWidth="1.500" /></svg></button>
        <button aria-label="Keyboard"><svg viewBox="0 0 16 12" className="h-3 w-4"><rect x=".6" y=".6" width="14.800" height="10.800" rx="1" fill="none" stroke="currentColor" strokeWidth="1.200" /><path d="M3 3.500h10M3 6h10" stroke="currentColor" strokeDasharray="1.500 1" strokeWidth="1.300" /><path d="M4 8.800h8" stroke="currentColor" /></svg></button>
        <span className="flex gap-2">
          <svg viewBox="0 0 17 17" className="h-[17px] w-[17px]"><path d="M11 1H1v11h12V9M4 15.500h8M8 12v3" fill="none" stroke="currentColor" strokeWidth="1.200" /><path d="M12.500 1h4v5h-4zM14.500 6v10" fill="none" stroke="currentColor" strokeWidth="1.200" /></svg>
          <svg viewBox="0 0 16 16" className="h-4 w-4"><path d="M1 6h3l4-3.500v11L4 10H1z" fill="none" stroke="currentColor" strokeWidth="1.200" /><path d="M10.500 5.500l5 5M15.500 5.500l-5 5" stroke="currentColor" strokeWidth="1.200" /></svg>
        </span>
        <span className="text-right">2:59 PM<br />2/13/2023</span>
      </div>
    </nav>
  );
}

export default function App() {
  return (
    <div className="relative flex h-screen flex-col overflow-hidden bg-white font-['Noto_Sans','Open_Sans',sans-serif]">
      <TitleBar />
      <MenuBar />
      <OrderEntry />
      <StatusBar />
      <Taskbar />
      <Browser />
    </div>
  );
}
